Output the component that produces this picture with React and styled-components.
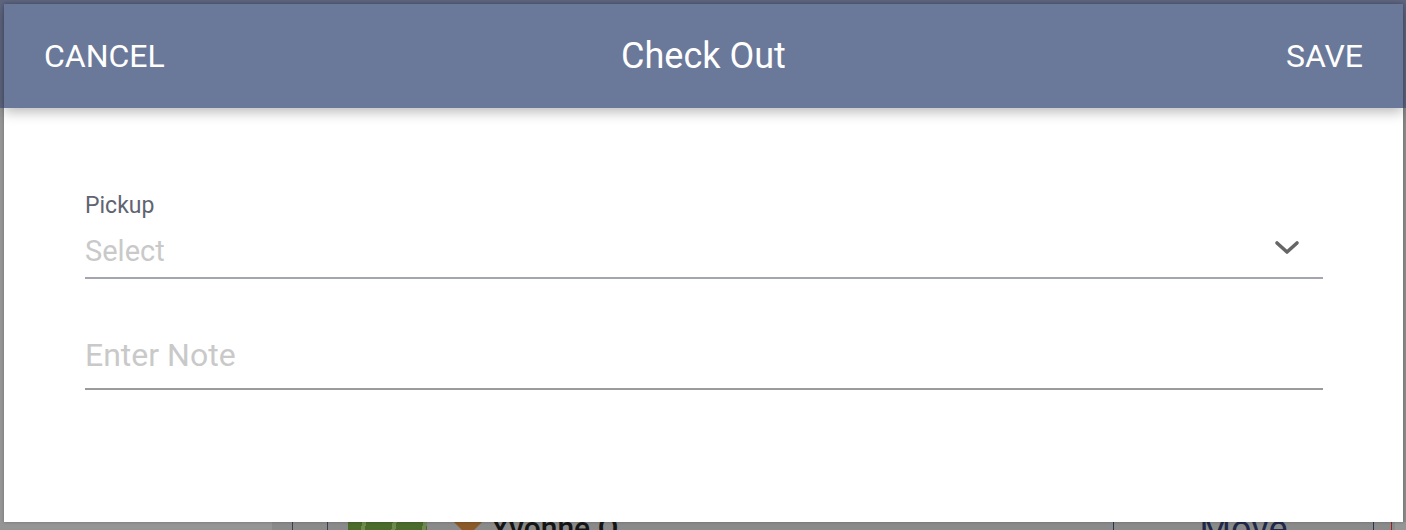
import React from 'react'
import styled, { createGlobalStyle } from 'styled-components'

const GlobalStyle = createGlobalStyle`
  *, *::before, *::after {
    box-sizing: border-box;
  }
  html, body {
    margin: 0;
    padding: 0;
    width: 1406px;
    height: 530px;
    overflow: hidden;
    font-family: Roboto, "Liberation Sans", Arial, sans-serif;
  }
`

const Screen = styled.div`
  position: relative;
  width: 1406px;
  height: 530px;
  overflow: hidden;
`

/* the page behind the dialog, already dimmed by the overlay */
const Backdrop = styled.div`
  display: flex;
  flex-direction: column;
  height: 100%;
  background: #8a8a8a;
`

const BackBar = styled.div`
  height: 108px;
  flex: none;
  background: #5e6680;
`

const BackBody = styled.div`
  flex: 1;
  display: flex;
`

const BackSide = styled.div`
  width: 272px;
  flex: none;
  background: #959595;
`

const BackMain = styled.div`
  flex: 1;
  display: flex;
  flex-direction: column;
  justify-content: flex-end;
`

const BackRow = styled.div`
  height: 8px;
  display: flex;
  align-items: flex-start;
  overflow: hidden;
`

const Cell = styled.div`
  width: ${p => p.w}px;
  height: 40px;
  flex: none;
  border-left: ${p => (p.line ? `1px solid ${p.line}` : 'none')};
  display: flex;
  justify-content: ${p => p.justify || 'flex-start'};
  background: ${p => p.bg || 'transparent'};
`

const Filler = styled.div`
  flex: 1;
  height: 40px;
  background: #959595;
`

const Avatar = styled.div`
  width: 79px;
  height: 60px;
  margin-left: 20px;
  flex: none;
  background: repeating-linear-gradient(100deg, #4b6b2c 0 14px, #6f8a4f 14px 18px, #4b6b2c 18px 30px);
`

const Diamond = styled.div`
  width: 20px;
  height: 20px;
  flex: none;
  margin: -10px 0 0 31px;
  background: #8a5a2a;
  transform: rotate(45deg);
`

const BackName = styled.div`
  margin-left: 13px;
  font-size: 30px;
  line-height: 36px;
  margin-top: -12px;
  color: #151515;
  font-weight: 500;
  white-space: nowrap;
`

const BackAction = styled.div`
  font-size: 36px;
  line-height: 40px;
  margin-top: -13px;
  color: #1f2a4a;
`

const Dialog = styled.div`
  position: absolute;
  top: 4px;
  left: 4px;
  width: 1399px;
  height: 518px;
  background: #fff;
  display: flex;
  flex-direction: column;
  box-shadow: 0 0 3px rgba(0, 0, 0, 0.25);
`

const Header = styled.header`
  height: 104px;
  flex: none;
  background: #6a7899;
  display: grid;
  grid-template-columns: 1fr auto 1fr;
  align-items: center;
  padding: 0 40px 0 40px;
  box-shadow: 0 4px 12px rgba(0, 0, 0, 0.28);
  position: relative;
  z-index: 1;
`

const HeadButton = styled.button`
  justify-self: ${p => (p.end ? 'end' : 'start')};
  background: none;
  border: none;
  padding: 0;
  font-family: inherit;
  font-size: 32px;
  font-weight: 400;
  color: #fff;
  cursor: pointer;
`

const Title = styled.h1`
  margin: 0;
  font-size: 36px;
  font-weight: 400;
  color: #fff;
`

const Body = styled.div`
  flex: 1;
  padding: 85px 80px 0 81px;
  display: flex;
  flex-direction: column;
  gap: 56px;
`

const Field = styled.div`
  display: flex;
  flex-direction: column;
`

const Label = styled.label`
  font-size: 23px;
  line-height: 26px;
  color: #5f6472;
  margin-bottom: 12px;
`

const FieldRow = styled.div`
  display: flex;
  align-items: center;
  justify-content: space-between;
  padding-bottom: ${p => p.pad}px;
  border-bottom: 2px solid ${p => p.line};
`

const Placeholder = styled.span`
  font-size: ${p => p.size}px;
  line-height: 40px;
  color: #c9c9c9;
`

const Chevron = styled.svg`
  width: 26px;
  height: 16px;
  margin-right: 23px;
  margin-top: -6px;
`

export default function App() {
  return (
    <Screen>
      <GlobalStyle />
      <Backdrop>
        <BackBar />
        <BackBody>
          <BackSide />
          <BackMain>
            <BackRow>
              <Cell w={20} />
              <Cell w={35} line="#3a3f52" />
              <Cell w={786} line="#3a3f52">
                <Avatar />
                <Diamond />
                <BackName>Yvonne O</BackName>
              </Cell>
              <Cell w={260} line="#2a3556" justify="center">
                <BackAction>Move</BackAction>
              </Cell>
              <Cell w={18} line="#2a3556" />
              <Cell w={4} line="#9c2020" />
              <Filler />
            </BackRow>
          </BackMain>
        </BackBody>
      </Backdrop>

      <Dialog>
        <Header>
          <HeadButton>CANCEL</HeadButton>
          <Title>Check Out</Title>
          <HeadButton end>SAVE</HeadButton>
        </Header>
        <Body>
          <Field>
            <Label>Pickup</Label>
            <FieldRow line="#a3a6ae" pad={6}>
              <Placeholder size={29}>Select</Placeholder>
              <Chevron viewBox="0 0 26 16">
                <polyline
                  points="3,3 13,12 23,3"
                  fill="none"
                  stroke="#666"
                  strokeWidth="3.6"
                  strokeLinecap="round"
                  strokeLinejoin="round"
                />
              </Chevron>
            </FieldRow>
          </Field>
          <Field>
            <FieldRow line="#9b9b9b" pad={13}>
              <Placeholder size={32}>Enter Note</Placeholder>
            </FieldRow>
          </Field>
        </Body>
      </Dialog>
    </Screen>
  )
}
